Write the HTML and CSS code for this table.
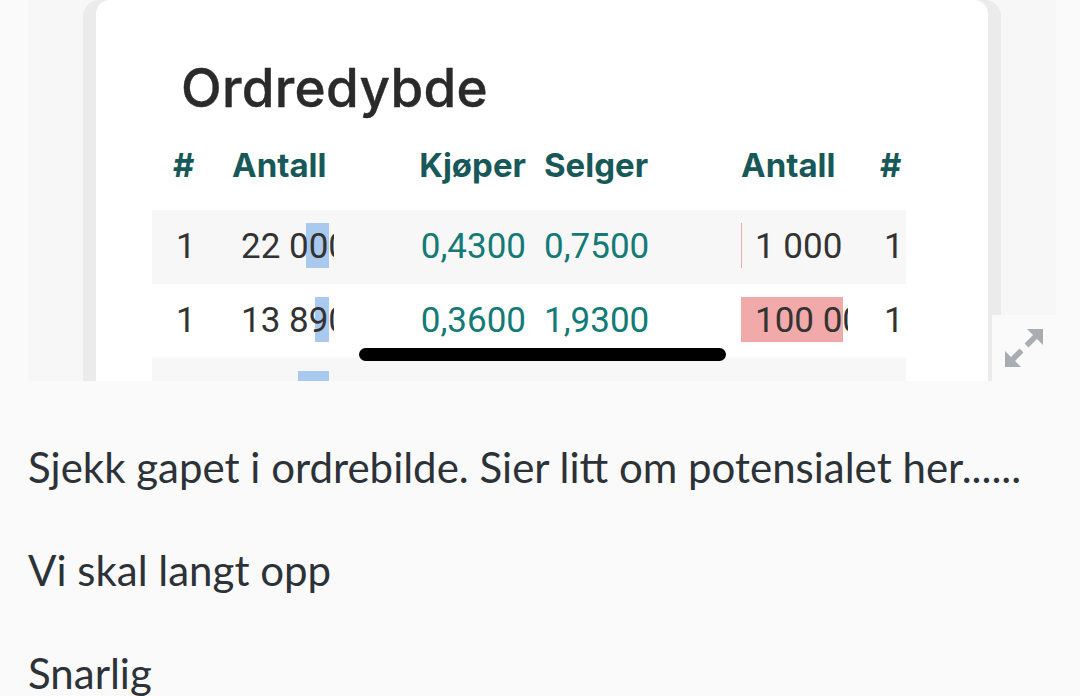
FILE: index.html
```html
<!DOCTYPE html>
<html lang="no">
<head>
<meta charset="utf-8">
<title>Ordredybde</title>
<link rel="stylesheet" href="styles.css">
</head>
<body>
<div class="post">
  <div class="shot">
    <div class="frame">
      <div class="card">
        <h2 class="title">Ordredybde</h2>
        <div class="book">
          <div class="row head">
            <div class="c-n">#</div>
            <div class="c-bq">Antall</div>
            <div class="c-bp">Kjøper</div>
            <div class="c-ap">Selger</div>
            <div class="c-aq">Antall</div>
            <div class="c-n2">#</div>
          </div>
          <div class="row odd">
            <div class="c-n">1</div>
            <div class="c-bq"><span class="bar bid" style="width:23px"></span><span class="val">22 000</span></div>
            <div class="c-bp">0,4300</div>
            <div class="c-ap">0,7500</div>
            <div class="c-aq"><span class="bar ask" style="width:1px"></span><span class="val">1 000</span></div>
            <div class="c-n2">1</div>
          </div>
          <div class="row">
            <div class="c-n">1</div>
            <div class="c-bq"><span class="bar bid" style="width:14px"></span><span class="val">13 890</span></div>
            <div class="c-bp">0,3600</div>
            <div class="c-ap">1,9300</div>
            <div class="c-aq"><span class="bar ask" style="width:102px"></span><span class="val">100 000</span></div>
            <div class="c-n2">1</div>
          </div>
          <div class="row odd">
            <div class="c-n">1</div>
            <div class="c-bq"><span class="bar bid" style="width:31px"></span><span class="val">30 000</span></div>
            <div class="c-bp">0,3500</div>
            <div class="c-ap">2,0000</div>
            <div class="c-aq"><span class="val">500</span></div>
            <div class="c-n2">1</div>
          </div>
        </div>
      </div>
    </div>
    <div class="home-bar"></div>
    <button class="expand" aria-label="Forstørr bilde">
      <svg viewBox="0 0 38 38" width="38" height="38">
        <polygon points="22,0 38,0 38,16" fill="#a8adb2"/>
        <line x1="32.5" y1="5.5" x2="21.5" y2="16.5" stroke="#a8adb2" stroke-width="5.5"/>
        <polygon points="0,38 0,22 16,38" fill="#a8adb2"/>
        <line x1="5.5" y1="32.5" x2="16.5" y2="21.5" stroke="#a8adb2" stroke-width="5.5"/>
      </svg>
    </button>
  </div>
  <div class="text">
    <p>Sjekk gapet i ordrebilde. Sier litt om potensialet her......</p>
    <p>Vi skal langt opp</p>
    <p>Snarlig</p>
  </div>
</div>
</body>
</html>
```

FILE: styles.css
```css
html, body {
  margin: 0;
  padding: 0;
  background: #fafafa;
}

body {
  width: 1080px;
  height: 696px;
  overflow: hidden;
}

.shot {
  position: relative;
  margin-left: 28px;
  width: 1028px;
  height: 381px;
  background: #f7f7f7;
  overflow: hidden;
}

.frame {
  margin-left: 55px;
  width: 892px;
  height: 100%;
  padding: 0 13px;
  background: #ebebeb;
  border-radius: 16px 16px 0 0;
}

.card {
  height: 100%;
  background: #ffffff;
  border-radius: 14px 14px 0 0;
  padding: 62px 0 0 56px;
  box-sizing: border-box;
}

.title {
  margin: 0 0 0 29px;
  height: 53px;
  font-family: "Inter", "Liberation Sans", sans-serif;
  font-weight: 500;
  font-size: 53px;
  line-height: 53px;
  color: #2a2a2a;
  letter-spacing: 0.3px;
  -webkit-text-stroke: 0.4px #2a2a2a;
}

.book {
  width: 754px;
  margin-top: 30px;
}

.row {
  display: grid;
  grid-template-columns: 82px 100px 192px 215px 107px 58px;
  height: 74px;
  align-items: stretch;
  font-family: "Roboto", "Liberation Sans", sans-serif;
  font-size: 35px;
  line-height: 74px;
  color: #333333;
  white-space: nowrap;
}

.row.odd {
  background: #f7f7f7;
}

.row.head {
  height: 40px;
  line-height: 40px;
  margin-bottom: 25px;
  font-family: "Inter", "Liberation Sans", sans-serif;
  font-weight: 700;
  font-size: 33px;
  color: #185858;
}

.c-n {
  padding-left: 24px;
}

.row.head .c-n {
  padding-left: 21px;
}

.c-bq {
  position: relative;
  overflow: hidden;
}

.row.head .c-bq {
  margin-left: -2px;
}

.row:not(.head) .c-bq .val {
  position: relative;
  padding-left: 7px;
}

.c-bp {
  text-align: right;
}

.c-ap {
  padding-left: 18px;
}

.row:not(.head) .c-bp,
.row:not(.head) .c-ap {
  color: #137a76;
}

.c-aq {
  position: relative;
  overflow: hidden;
}

.row:not(.head) .c-aq .val {
  position: relative;
  padding-left: 14px;
}

.c-n2 {
  padding-left: 36px;
}

.row.head .c-n2 {
  padding-left: 32px;
}

.bar {
  position: absolute;
  top: 13px;
  height: 45px;
}

.bar.bid {
  right: 5px;
  background: #a9c9ee;
}

.bar.ask {
  left: 0;
  background: #f1a9a9;
}

.home-bar {
  position: absolute;
  left: 331px;
  top: 348px;
  width: 367px;
  height: 13px;
  border-radius: 7px;
  background: #000000;
}

.expand {
  position: absolute;
  right: 0;
  bottom: 0;
  width: 64px;
  height: 66px;
  padding: 0;
  border: 0;
  background: #fafafa;
  display: flex;
  align-items: center;
  justify-content: center;
}

.expand svg {
  display: block;
  margin-top: -1px;
}

.text {
  padding: 55px 0 0 28px;
  font-family: "Lato", "Liberation Sans", sans-serif;
  font-size: 42px;
  line-height: 63px;
  color: #2c3237;
}

.text p {
  margin: 0 0 40px 0;
}
```
